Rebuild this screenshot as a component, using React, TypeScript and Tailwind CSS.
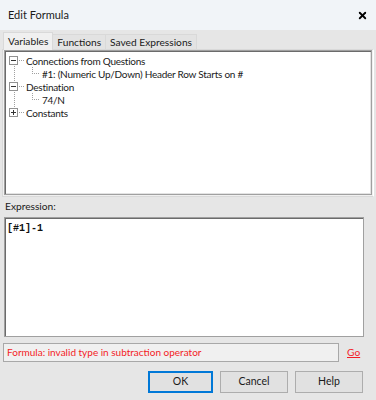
import { X } from 'lucide-react';

const ui = { fontFamily: 'Lato, "Noto Sans", sans-serif' };

// one row of the variables tree
function TreeRow({ depth, expander, label, last }: { depth: number; expander?: '+' | '-'; label: string; last?: boolean }) {
    return (
        <div className="relative flex h-[13px] items-center text-[10px] leading-none tracking-[-0.25px] text-[#1a1a1a]">
            {depth === 0 ? (
                <>
                    <div className="absolute left-[4px] top-[2px] flex h-[9px] w-[9px] items-center justify-center border border-[#919191] bg-white">
                        <div className="h-px w-[5px] bg-[#333]" />
                        {expander === '+' && <div className="absolute h-[5px] w-px bg-[#333]" />}
                    </div>
                    <div className="absolute left-[14px] top-[6px] w-[5px] border-t border-dotted border-[#a0a0a0]" />
                    <span className="ml-[21px]">{label}</span>
                </>
            ) : (
                <>
                    <div className={`absolute left-[27px] top-0 border-l border-dotted border-[#a0a0a0] ${last ? 'h-[7px]' : 'h-[13px]'}`} />
                    <div className="absolute left-[27px] top-[6px] w-[7px] border-t border-dotted border-[#a0a0a0]" />
                    <span className="ml-[37px]">{label}</span>
                </>
            )}
        </div>
    );
}

export default function App() {
    return (
        <div className="h-[400px] w-[376px] overflow-hidden bg-[#e6e6e6]" style={ui}>
            {/* Title bar */}
            <div className="flex h-[30px] items-center justify-between bg-[#f1f4f8] pl-[8px] pr-[8px]">
                <span className="text-[11px] text-[#1b1b1b]">Edit Formula</span>
                <X className="h-[11px] w-[11px] text-black" strokeWidth={4} />
            </div>

            {/* Tabs */}
            <div className="mt-[2px] flex h-[17px] items-end pl-[3px] text-[10.2px] leading-none text-[#1a1a1a]">
                <div className="relative z-10 -mb-px flex h-[18px] items-center border border-b-0 border-[#d9d9d9] bg-[#f0f0f0] px-[4px]">Variables</div>
                <div className="flex h-[15px] items-center border border-b-0 border-l-0 border-[#d9d9d9] bg-[#e3e3e3] px-[4px]">Functions</div>
                <div className="flex h-[15px] items-center border border-b-0 border-l-0 border-[#d9d9d9] bg-[#e3e3e3] px-[4px]">Saved Expressions</div>
            </div>

            {/* Tab panel */}
            <div className="mx-[2px] h-[148px] border border-[#d9d9d9] border-r-white bg-[#f0f0f0] px-[1px] pt-0">
                <div className="relative h-[145px] border border-[#a0a0a0] bg-white pt-[3px] shadow-[inset_1px_1px_0_#6b6b6b,inset_-1px_-1px_0_#e3e3e3]">
                    <div className="absolute left-[9px] top-[10px] h-[56px] border-l border-dotted border-[#a0a0a0]" />
                    <TreeRow depth={0} expander="-" label="Connections from Questions" />
                    <TreeRow depth={1} label="#1: (Numeric Up/Down) Header Row Starts on #" last />
                    <TreeRow depth={0} expander="-" label="Destination" />
                    <TreeRow depth={1} label="74/N" last />
                    <TreeRow depth={0} expander="+" label="Constants" />
                </div>
            </div>

            {/* Expression */}
            <div className="ml-[5px] h-[18px] text-[10.2px] leading-[18px] text-[#1a1a1a]">Expression:</div>
            <div className="mx-[4px] mt-[2px] h-[120px] w-[360px] border border-[#a0a0a0] bg-white px-[2px] pt-[1px] leading-[12px] shadow-[inset_1px_1px_0_#6b6b6b]">
                <span className="text-[10px] font-semibold text-[#111]" style={{ fontFamily: '"Liberation Mono", monospace' }}>[#1]-1</span>
            </div>

            {/* Error line */}
            <div className="mt-[6px] flex items-center">
                <div className="ml-[3px] flex h-[19px] w-[336px] items-center border border-[#a8a8a8] bg-[#f0f0f0] pl-[3px] text-[10px] text-[#f31c26]">
                    Formula: invalid type in subtraction operator
                </div>
                <span className="ml-[8px] text-[10.2px] text-[#f31c26] underline">Go</span>
            </div>

            {/* Buttons */}
            <div className="mt-[9px] flex justify-end gap-[7px] pr-[13px] text-[10.5px] text-[#1a1a1a]">
                <button className="flex h-[22px] w-[65px] items-center justify-center border-2 border-[#0078d7] bg-[#e1e1e1]">OK</button>
                <button className="flex h-[22px] w-[68px] items-center justify-center border border-[#adadad] bg-[#e1e1e1]">Cancel</button>
                <button className="flex h-[22px] w-[68px] items-center justify-center border border-[#adadad] bg-[#e1e1e1]">Help</button>
            </div>
        </div>
    );
}
